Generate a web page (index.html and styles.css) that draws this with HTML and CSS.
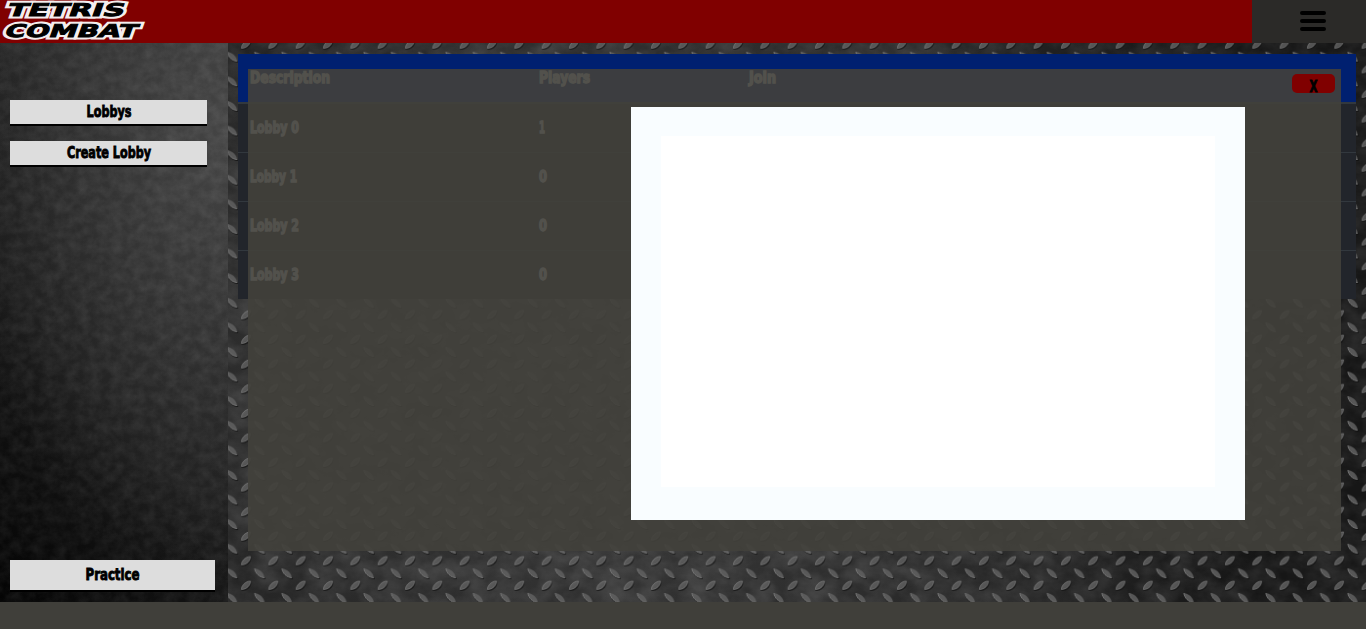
FILE: index.html
```html
<!DOCTYPE html>
<html lang="en">
<head>
<meta charset="utf-8">
<title>Tetris Combat</title>
<link rel="stylesheet" href="styles.css">
</head>
<body>
<header class="topbar">
  <svg class="logo" width="146" height="43" viewBox="0 0 146 43">
    <g class="logo-rim">
      <text transform="translate(6 16.300) skewX(-20)" textLength="117" lengthAdjust="spacingAndGlyphs">TETRIS</text>
      <text transform="translate(3.500 37.300) skewX(-20)" textLength="132" lengthAdjust="spacingAndGlyphs">COMBAT</text>
    </g>
    <g class="logo-face" aria-hidden="true">
      <text transform="translate(6 16.300) skewX(-20)" textLength="117" lengthAdjust="spacingAndGlyphs">TETRIS</text>
      <text transform="translate(3.500 37.300) skewX(-20)" textLength="132" lengthAdjust="spacingAndGlyphs">COMBAT</text>
    </g>
  </svg>
  <div class="menu"><svg width="28" height="22" viewBox="0 0 28 22"><path d="M3 3H25M3 11H25M3 19H25" stroke="#000" stroke-width="4" stroke-linecap="round"/></svg></div>
</header>
<div class="shell">
  <aside class="sidebar">
    <svg class="texture" width="228" height="559">
      <filter id="stone" x="0" y="0" width="100%" height="100%" color-interpolation-filters="sRGB">
        <feTurbulence type="fractalNoise" baseFrequency=".09 .1" numOctaves="5" seed="8"/>
        <feColorMatrix values=".8 0 0 0 -.22  .8 0 0 0 -.22  .8 0 0 0 -.22  0 0 0 0 .13"/>
      </filter>
      <rect width="228" height="559" filter="url(#stone)"/>
    </svg>
    <nav class="side-nav">
      <div class="btn"><svg width="80" height="24"><text class="label" x="17.500" y="17" textLength="45" lengthAdjust="spacingAndGlyphs">Lobbys</text></svg></div>
      <div class="btn"><svg width="120" height="24"><text class="label" x="18" y="17" textLength="84" lengthAdjust="spacingAndGlyphs">Create Lobby</text></svg></div>
    </nav>
    <div class="btn practice"><svg width="90" height="30"><text class="label" x="17.500" y="20" textLength="54" lengthAdjust="spacingAndGlyphs">Practice</text></svg></div>
  </aside>
  <main class="content">
    <svg class="texture" width="1138" height="559">
      <defs>
        <filter id="steel" x="0" y="0" width="100%" height="100%" color-interpolation-filters="sRGB">
          <feTurbulence type="fractalNoise" baseFrequency=".035 .05" numOctaves="5" seed="3"/>
          <feColorMatrix values=".9 0 0 0 -.25  .9 0 0 0 -.25  .9 0 0 0 -.25  0 0 0 0 .17"/>
        </filter>
        <linearGradient id="lug" x1="0" y1="0" x2="1" y2="1"><stop offset="0" stop-color="#6a6a6a"/><stop offset="1" stop-color="#505050"/></linearGradient>
        <pattern id="tread" width="27.330" height="24.600" patternUnits="userSpaceOnUse" patternTransform="translate(4.330 13.700)">
          <path d="M9 17.800C14.500 18 19.500 14 19 9L17 9.500L9 16.500Z" fill="#141414" opacity=".85"/>
          <path d="M9.200 16.300C9 12.300 13 8 18 7.800C18.300 12 14.500 16 9.200 16.300Z" fill="url(#lug)" stroke="#909090" stroke-width=".6"/>
          <g id="back">
            <path d="M-5.200 -4.500C-5 1 0 6 6 5.800L4.500 3.500Z" fill="#0c0c0c"/>
            <path d="M-5 -4.800C-4.500 0 -.5 4.300 4.800 4.500C4.500 0 0 -4 -5 -4.800Z" fill="#606060"/>
            <path d="M-5 -4.800C-4.500 0 -.5 4.300 4.800 4.500" fill="none" stroke="#929292" stroke-width=".8"/>
          </g>
          <use href="#back" x="27.330"/><use href="#back" y="24.600"/><use href="#back" x="27.330" y="24.600"/>
        </pattern>
      </defs>
      <rect width="1138" height="559" filter="url(#steel)"/>
      <rect width="1138" height="559" fill="url(#tread)" opacity=".85"/>
    </svg>
    <div class="table">
      <div class="row head">
        <div><svg class="cell" width="100" height="48"><text x="2" y="29" textLength="80" lengthAdjust="spacingAndGlyphs">Description</text></svg></div>
        <div><svg class="cell" width="70" height="48"><text x="1" y="29" textLength="51" lengthAdjust="spacingAndGlyphs">Players</text></svg></div>
        <div><svg class="cell" width="60" height="48"><text x="1" y="29" textLength="27" lengthAdjust="spacingAndGlyphs">Join</text></svg></div>
      </div>
      <div class="row"><div><svg class="cell" width="70" height="48"><text x="2" y="29" textLength="49" lengthAdjust="spacingAndGlyphs">Lobby 0</text></svg></div><div><svg class="cell" width="20" height="48"><text x="1" y="29" textLength="6" lengthAdjust="spacingAndGlyphs">1</text></svg></div></div>
      <div class="row"><div><svg class="cell" width="70" height="48"><text x="2" y="29" textLength="47" lengthAdjust="spacingAndGlyphs">Lobby 1</text></svg></div><div><svg class="cell" width="20" height="48"><text x="1" y="29" textLength="8" lengthAdjust="spacingAndGlyphs">0</text></svg></div></div>
      <div class="row"><div><svg class="cell" width="70" height="48"><text x="2" y="29" textLength="49" lengthAdjust="spacingAndGlyphs">Lobby 2</text></svg></div><div><svg class="cell" width="20" height="48"><text x="1" y="29" textLength="8" lengthAdjust="spacingAndGlyphs">0</text></svg></div></div>
      <div class="row"><div><svg class="cell" width="70" height="48"><text x="2" y="29" textLength="49" lengthAdjust="spacingAndGlyphs">Lobby 3</text></svg></div><div><svg class="cell" width="20" height="48"><text x="1" y="29" textLength="8" lengthAdjust="spacingAndGlyphs">0</text></svg></div></div>
    </div>
    <div class="overlay">
      <div class="close"><svg width="20" height="19"><text class="label" x="5.500" y="17.500" textLength="8" lengthAdjust="spacingAndGlyphs">X</text></svg></div>
      <div class="dialog"><div class="dialog-body"></div></div>
    </div>
  </main>
</div>
</body>
</html>
```
FILE: styles.css
```css
* { box-sizing: border-box; }
body { margin: 0; background: #403f3a; font-family: "DejaVu Sans Condensed", "DejaVu Sans", sans-serif; height: 629px; overflow: hidden; }
svg { display: block; overflow: visible; }
.topbar { height: 43px; background: #800000; display: flex; justify-content: space-between; }
.logo text { font: bold 17.5px "DejaVu Sans", sans-serif; }
.logo-rim text { fill: #fff; stroke: #f4eeee; stroke-width: 5px; stroke-linejoin: miter; stroke-miterlimit: 2; }
.logo-face text { fill: #000; stroke: #000; stroke-width: .9px; }
.menu { width: 114px; background: #2b2a28; display: flex; align-items: center; justify-content: center; padding: 0 0 1px 8px; }
.shell { display: flex; height: 559px; }
.texture { position: absolute; left: 0; top: 0; }
.sidebar { position: relative; width: 228px; padding: 57px 13px 10px 10px; display: flex; flex-direction: column; justify-content: space-between; background: radial-gradient(ellipse 270px 450px at 220px 90px, rgba(84,84,84,.85), rgba(40,40,40,0)), linear-gradient(50deg, #050505, #1b1b1b 40%, #303030); }
.side-nav { position: relative; display: flex; flex-direction: column; gap: 15px; margin-right: 8px; }
.btn { position: relative; height: 26px; background: #ddd; border-bottom: 2px solid #000; display: flex; justify-content: center; }
.practice { height: 32px; }
.label, .cell text { font-size: 16.5px; font-weight: bold; stroke-width: .9px; }
.label { fill: #000; stroke: #000; }
.content { position: relative; width: 1138px; padding: 11px 10px; background: radial-gradient(ellipse 680px 560px at 400px 300px, #4c4c4c, #373737 55%, #1b1b1b); }
.table { position: relative; background: #22252b; }
.row { display: grid; grid-template-columns: 290px 210px 1fr; height: 49px; padding-left: 10px; border-bottom: 1px solid #32383e; }
.row:last-child { height: 48px; border-bottom: 0; }
.row.head { height: 50px; background: #002070; border-bottom: 2px solid #32383e; }
.cell text { fill: #fff; stroke: #fff; stroke-width: 1.3px; }
.overlay { position: absolute; left: 20px; top: 26px; width: 1093px; height: 482px; padding: 5px 6px 31px 383px; background: rgba(66,65,59,.915); display: flex; flex-direction: column; gap: 14px; }
.close { align-self: flex-end; width: 43px; height: 19px; border-radius: 5px; background: #800000; display: flex; justify-content: center; }
.dialog { width: 614px; height: 413px; padding: 29px 30px 33px; background: #f9fdff; }
.dialog-body { height: 351px; background: #fff; }
```
